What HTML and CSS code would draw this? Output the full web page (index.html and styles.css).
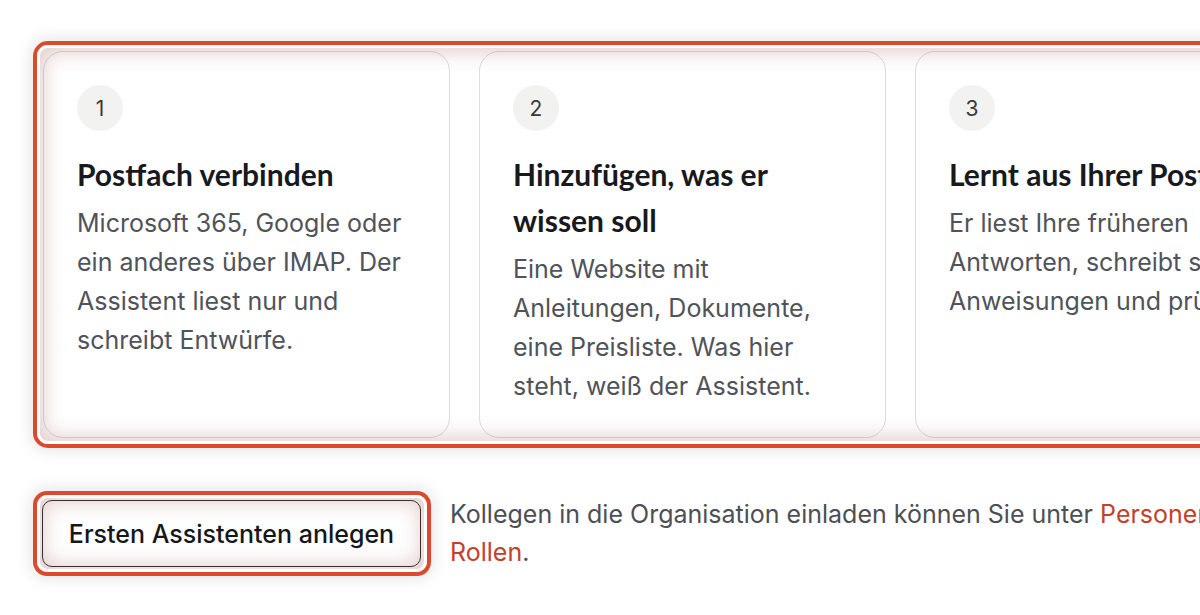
FILE: index.html
```html
<!DOCTYPE html>
<html lang="de">
<head>
<meta charset="utf-8">
<title>Assistent einrichten</title>
<link rel="stylesheet" href="styles.css">
</head>
<body>
<main class="page">
  <section class="hl hl-steps">
    <div class="steps">
      <article class="card">
        <div class="num">1</div>
        <h3 class="card-title">Postfach verbinden</h3>
        <p class="card-text">Microsoft 365, Google oder ein anderes über IMAP. Der Assistent liest nur und schreibt Entwürfe.</p>
      </article>
      <article class="card">
        <div class="num">2</div>
        <h3 class="card-title">Hinzufügen, was er wissen soll</h3>
        <p class="card-text">Eine Website mit Anleitungen, Dokumente, eine Preisliste. Was hier steht, weiß der Assistent.</p>
      </article>
      <article class="card">
        <div class="num">3</div>
        <h3 class="card-title">Lernt aus Ihrer Postfach</h3>
        <p class="card-text">Er liest Ihre früheren Antworten, schreibt seine Anweisungen und prüft sie.</p>
      </article>
    </div>
  </section>

  <div class="actions">
    <div class="hl hl-btn">
      <button class="btn" type="button">Ersten Assistenten anlegen</button>
    </div>
    <p class="hint">Kollegen in die Organisation einladen können Sie unter <a href="#" class="link">Personen &amp; Rollen</a>.</p>
  </div>
</main>
</body>
</html>
```

FILE: styles.css
```css
* {
  box-sizing: border-box;
}

html, body {
  margin: 0;
  padding: 0;
  background: #ffffff;
  overflow: hidden;
}

body {
  width: 1200px;
  height: 615px;
  font-family: "Inter", "Noto Sans", sans-serif;
}

.page {
  padding: 41px 0 0 33px;
  width: 1400px;
}

/* red highlight frames */
.hl {
  position: relative;
  border: 4px solid #dc4a2d;
  border-radius: 15px;
  background: #ffffff;
  box-shadow: 0 0 16px 3px rgba(0, 0, 0, 0.10);
}

.hl::after {
  content: "";
  position: absolute;
  inset: 0;
  border-radius: 11px;
  pointer-events: none;
  box-shadow: inset 0 0 0 3px #ffffff, inset 0 0 20px 7px rgba(150, 75, 65, 0.28);
}

.hl-steps {
  display: inline-block;
  padding: 6px;
}

.steps {
  display: grid;
  grid-template-columns: repeat(3, 407px);
  column-gap: 29px;
}

.card {
  border: 1px solid #dcdcdc;
  border-radius: 20px;
  background: #ffffff;
  padding: 33px 33px 31px 33px;
}

.num {
  width: 46px;
  height: 46px;
  border-radius: 50%;
  background: #f2f2f0;
  color: #3a3a3a;
  font-size: 21px;
  display: flex;
  align-items: center;
  justify-content: center;
  margin-bottom: 20px;
}

.card-title {
  margin: 0 0 7px 0;
  font-family: "Lato", "Inter", sans-serif;
  font-weight: 700;
  font-size: 30px;
  line-height: 46px;
  color: #17191e;
  white-space: nowrap;
}

.card:nth-child(2) .card-title {
  white-space: normal;
  width: 280px;
}

.card-text {
  margin: 0;
  font-size: 25px;
  line-height: 39px;
  color: #50535a;
}

.actions {
  display: flex;
  align-items: flex-start;
  gap: 19px;
  margin-top: 43px;
}

.hl-btn {
  flex: none;
  padding: 5px 6px 5px 5px;
  border-radius: 14px;
}

.btn {
  display: block;
  width: 379px;
  height: 67px;
  border: 1px solid #2a2a2a;
  border-radius: 10px;
  background: #ffffff;
  color: #15171b;
  font-family: "Inter", sans-serif;
  font-size: 25px;
  font-weight: 500;
  padding: 0;
}

.hint {
  margin: 4px 0 0 0;
  font-family: "Inter", sans-serif;
  font-size: 25px;
  line-height: 38px;
  color: #4d4f55;
  width: 820px;
}

.link {
  color: #c4402a;
  text-decoration: none;
}
```
